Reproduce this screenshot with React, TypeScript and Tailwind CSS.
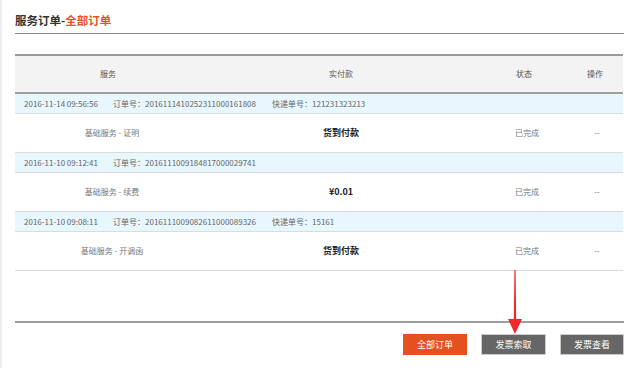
const rows = [
  {
    date: "2016-11-14 09:56:56",
    order: "2016111410252311000161808",
    express: "121231323213",
    service: "基础服务 - 证明",
    price: "货到付款",
  },
  {
    date: "2016-11-10 09:12:41",
    order: "2016111009184817000029741",
    express: "",
    service: "基础服务 - 续费",
    price: "¥0.01",
  },
  {
    date: "2016-11-10 09:08:11",
    order: "2016111009082611000089326",
    express: "15161",
    service: "基础服务 - 开调函",
    price: "货到付款",
  },
];

const cols = "grid grid-cols-[186px_280px_86px_56px] items-center text-center";

export default function App() {
  return (
    <div
      className="relative w-[624px] h-[368px] bg-white border-l-2 border-[#eceef3] pl-[13px] overflow-hidden"
      style={{ fontFamily: '"Noto Sans CJK SC", "Noto Sans", sans-serif' }}
    >
      <div className="h-[34px] border-b border-[#8a8a8a] pt-[6px]">
        <span className="text-[11.5px] leading-[16px] font-bold text-[#333]">
          服务订单-<span className="text-[#e9521f]">全部订单</span>
        </span>
      </div>

      <div className="mt-[20px] w-[608px] border-t-2 border-[#9a9a9a]">
        <div className={`${cols} h-[38px] bg-[#f3f3f3] border-b-2 border-[#a0a0a0] text-[8px] text-[#555]`}>
          <div>服务</div>
          <div>实付款</div>
          <div>状态</div>
          <div>操作</div>
        </div>

        {rows.map((r) => (
          <div key={r.order}>
            <div className="flex items-center h-[20px] bg-[#e8f6fd] border-b border-[#d9dcdf] pl-[9px] text-[8px] text-[#666]">
              <span className="w-[89px]">{r.date}</span>
              <span className="w-[159px]">订单号：{r.order}</span>
              {r.express && <span>快递单号：{r.express}</span>}
            </div>
            <div className={`${cols} h-[39px] border-b border-[#d9dcdf] text-[8px] text-[#777]`}>
              <div className="pl-[8px]">{r.service}</div>
              <div className="text-[9px] font-bold text-[#222]">{r.price}</div>
              <div className="pl-[6px]">已完成</div>
              <div className="pl-[4px]">--</div>
            </div>
          </div>
        ))}
      </div>

      <div className="mt-[50px] border-t-2 border-[#9e9e9e]" />

      <div className="flex justify-end gap-[14px] mt-[11px] text-[9px] text-white">
        <button className="w-[64px] h-[21px] bg-[#e5501f]">全部订单</button>
        <button className="w-[65px] h-[21px] bg-[#666] border border-[#ccc]">发票索取</button>
        <button className="w-[64px] h-[21px] bg-[#666] border border-[#ccc]">发票查看</button>
      </div>

      <div className="absolute left-[622px] top-[158px] w-[2px] h-[29px] bg-[#8fbf5a]" />

      <svg className="absolute left-[503px] top-[268px]" width="20" height="70" viewBox="0 0 20 70">
        <polygon points="9.4,2 10.6,2 11.2,52 8.8,52" fill="#f2282d" />
        <polygon points="3,51 17,51 10,66" fill="#f2282d" />
      </svg>
    </div>
  );
}
